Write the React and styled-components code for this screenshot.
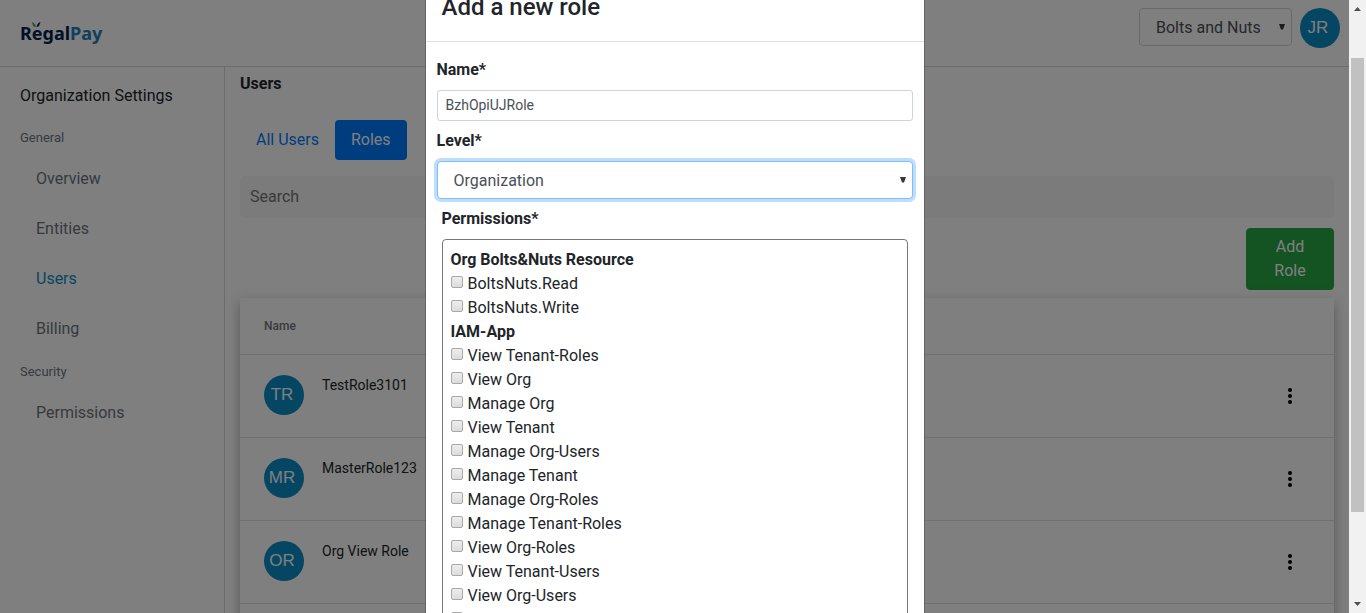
import React from "react";
import styled, { createGlobalStyle, css } from "styled-components";

const GlobalStyle = createGlobalStyle`
  *, *::before, *::after { box-sizing: border-box; }
  body {
    margin: 0;
    background: #fff;
    color: #212529;
    font-family: Roboto, "Liberation Sans", sans-serif;
    font-size: 16px;
    line-height: 24px;
  }
  button, input, select { font: inherit; color: inherit; margin: 0; }
`;

const brand = "#0b8cc6";
const line = "#dee2e6";

const Screen = styled.div`
  display: grid;
  grid-template-columns: minmax(0, 1fr) 17px;
  height: 100vh;
  overflow: hidden;
`;

const Viewport = styled.div`
  position: relative;
  display: flex;
  flex-direction: column;
  min-height: 0;
  overflow: hidden;
`;

/* Top bar */
const TopBar = styled.header`
  display: flex;
  flex: none;
  align-items: flex-start;
  justify-content: space-between;
  padding: 8px 9px 10px 20px;
  height: 67px;
  border-bottom: 1px solid #d9d9d9;
`;

const Brand = styled.a`
  position: relative;
  margin-top: 13px;
  color: #00214f;
  font-family: "Noto Sans", sans-serif;
  font-size: 18px;
  font-weight: 700;
  line-height: 24px;
  text-decoration: none;
`;

const BrandAccent = styled.span`
  color: #2380b8;
`;

const Leaves = styled.svg`
  position: absolute;
  left: 12px;
  top: 1px;
`;

const Account = styled.div`
  display: flex;
  gap: 8px;
`;

const Avatar = styled.span`
  display: flex;
  flex: none;
  align-items: center;
  justify-content: center;
  width: 40px;
  height: 40px;
  padding-right: 4px;
  border-radius: 50%;
  background: ${brand};
  color: #fff;
  font-family: "Liberation Sans", sans-serif;
  font-size: 17px;
`;

const SelectWrap = styled.div`
  position: relative;
  width: ${(p) => p.$width || "100%"};
`;

const Select = styled.select`
  display: block;
  appearance: none;
  width: 100%;
  height: 38px;
  padding: 2px 16px 0;
  border: 1px solid #ced4da;
  border-radius: 4px;
  background: #fff;
  color: #495057;
  outline: none;
  ${(p) =>
    p.$focused &&
    css`
      border-color: #80bdff;
      box-shadow: 0 0 0 3px #bfdeff;
    `}
`;

const SelectArrow = styled.svg`
  position: absolute;
  right: 7px;
  top: 16px;
  pointer-events: none;
`;

/* Body */
const Columns = styled.div`
  display: grid;
  grid-template-columns: 225px minmax(0, 1fr);
  flex: 1;
`;

const Sidebar = styled.nav`
  padding: 17px 20px;
  border-right: 1px solid #d9d9d9;
`;

const SidebarTitle = styled.h1`
  margin: 0 0 20px;
  font-size: 16px;
  font-weight: 400;
  line-height: 24px;
  color: #212529;
`;

const GroupTitle = styled.h2`
  margin: 0 0 6px;
  font-size: 13px;
  font-weight: 400;
  line-height: 20px;
  color: #6c757d;
`;

const NavList = styled.ul`
  margin: 0 0 8px;
  padding: 0 0 0 16px;
  list-style: none;
`;

const NavLink = styled.a`
  display: block;
  line-height: 50px;
  text-decoration: none;
  color: ${(p) => (p.$active ? brand : "#6c757d")};
`;

const Main = styled.main`
  display: flex;
  flex-direction: column;
  align-items: stretch;
  padding: 5px 15px 0;
`;

const MainTitle = styled.h2`
  margin: 0 0 24px;
  font-size: 16px;
  font-weight: 700;
  line-height: 24px;
`;

const Tabs = styled.div`
  display: flex;
  margin-bottom: 16px;
`;

const Tab = styled.button`
  padding: 8px 16px;
  border: 0;
  border-radius: 4px;
  background: ${(p) => (p.$active ? "#007bff" : "transparent")};
  color: ${(p) => (p.$active ? "#fff" : "#007bff")};
`;

const Search = styled.input`
  width: 100%;
  height: 42px;
  padding: 0 10px 2px;
  border: 0;
  border-radius: 5px;
  background: #f6f6f6;
  &::placeholder { color: #757575; }
`;

const AddButton = styled.button`
  align-self: flex-end;
  width: 88px;
  margin: 10px 0 8px;
  padding: 6px 12px;
  border: 1px solid #28a745;
  border-radius: 4px;
  background: #28a745;
  color: #fff;
`;

const Card = styled.section`
  background: #fff;
  box-shadow: 0 5px 5px -3px rgba(0, 0, 0, 0.2), 0 8px 10px 1px rgba(0, 0, 0, 0.14),
    0 3px 14px 2px rgba(0, 0, 0, 0.12);
`;

const Table = styled.table`
  width: 100%;
  border-spacing: 0;
`;

const HeadCell = styled.th`
  height: 57px;
  padding: 0 24px;
  border-bottom: 1px solid #e0e0e0;
  color: #757575;
  font-size: 12px;
  font-weight: 500;
  text-align: left;
`;

const Cell = styled.td`
  height: 83px;
  padding: 0 24px 2px;
  border-bottom: 1px solid #e0e0e0;
  ${(p) => p.$end && css`
    width: 88px;
    padding: 0 24px;
    text-align: center;
  `}
`;

const Person = styled.div`
  display: flex;
  gap: 18px;
  font-size: 14px;
  line-height: 20px;
`;

const MenuButton = styled.button`
  display: flex;
  justify-content: center;
  width: 40px;
  padding: 0;
  border: 0;
  background: none;
`;

/* Modal */
const Backdrop = styled.div`
  position: absolute;
  inset: 0;
  overflow: hidden;
  background: rgba(0, 0, 0, 0.5);
`;

const Dialog = styled.form`
  width: 100%;
  max-width: 500px;
  margin: -28px auto 28px;
  border: 1px solid rgba(0, 0, 0, 0.2);
  border-radius: 5px;
  background: #fff;
  background-clip: padding-box;
`;

const DialogHeader = styled.header`
  padding: 16px;
  border-bottom: 1px solid ${line};
`;

const DialogTitle = styled.h2`
  margin: 0;
  font-size: 24px;
  font-weight: 500;
  line-height: 36px;
`;

const DialogBody = styled.div`
  display: flex;
  flex-direction: column;
  gap: 8px;
  padding: 16px 11px;
`;

const Label = styled.label`
  font-weight: 700;
`;

const TextInput = styled.input`
  width: 100%;
  height: 31px;
  padding: 0 8px 2px;
  border: 1px solid #ced4da;
  border-radius: 3px;
  color: #495057;
  font-size: 14px;
`;

const Permissions = styled.section`
  display: flex;
  flex-direction: column;
  gap: 8px;
  padding: 0 5px;
`;

const SectionTitle = styled.h3`
  margin: 0;
  font-size: 16px;
  font-weight: 700;
  line-height: 24px;
`;

const PermissionBox = styled.div`
  padding: 8px;
  border: 1px solid #777;
  border-radius: 4px;
`;

const Option = styled.label`
  display: flex;
  align-items: center;
  gap: 5px;
`;

const Checkbox = styled.input`
  appearance: none;
  width: 12px;
  height: 12px;
  margin-bottom: 4px;
  border: 1px solid #a9a9a9;
  border-radius: 2px;
  background: linear-gradient(#eee, #dcdcdc);
`;

/* Scrollbar */
const Track = styled.div`
  display: flex;
  flex-direction: column;
  align-items: center;
  background: #f1f1f1;
`;

const TrackArrow = styled.svg`
  flex: none;
  width: 17px;
  height: 17px;
  fill: #505050;
`;

const Gap = styled.span`
  flex: ${(p) => p.$share};
`;

const Thumb = styled.span`
  flex: 454;
  width: 13px;
  background: #c1c1c1;
`;

const groups = [
  { title: "General", items: ["Overview", "Entities", "Users", "Billing"] },
  { title: "Security", items: ["Permissions"] },
];

const roles = [
  ["TR", "TestRole3101"],
  ["MR", "MasterRole123"],
  ["OR", "Org View Role"],
];

const permissionGroups = [
  { title: "Org Bolts&Nuts Resource", items: ["BoltsNuts.Read", "BoltsNuts.Write"] },
  {
    title: "IAM-App",
    items: [
      "View Tenant-Roles",
      "View Org",
      "Manage Org",
      "View Tenant",
      "Manage Org-Users",
      "Manage Tenant",
      "Manage Org-Roles",
      "Manage Tenant-Roles",
      "View Org-Roles",
      "View Tenant-Users",
      "View Org-Users",
      "Manage Tenant-Users",
    ],
  },
];

function Dropdown({ id, label, value, width, focused }) {
  return (
    <SelectWrap $width={width}>
      <Select id={id} aria-label={label} defaultValue={value} $focused={focused}>
        <option>{value}</option>
      </Select>
      <SelectArrow width="6" height="6" viewBox="0 0 6 6" aria-hidden="true">
        <path d="M0 0h6L4 5.600H2z" fill="#343a40" />
      </SelectArrow>
    </SelectWrap>
  );
}

function PageScrollbar() {
  return (
    <Track aria-hidden="true">
      <TrackArrow viewBox="0 0 17 17"><path d="M5 11h7L8.500 7z" /></TrackArrow>
      <Gap $share={41} />
      <Thumb />
      <Gap $share={84} />
      <TrackArrow viewBox="0 0 17 17"><path d="M5 6h7l-3.500 4z" /></TrackArrow>
    </Track>
  );
}

export default function App() {
  return (
    <Screen>
      <GlobalStyle />
      <Viewport>
        <TopBar>
          <Brand href="#home">
            Regal<BrandAccent>Pay</BrandAccent>
            <Leaves width="9" height="5" viewBox="0 0 9 5" aria-hidden="true">
              <path d="M0 0C2 1 3.500 2.500 4 5L1.500 4.500C.8 3 .3 1.500 0 0z" fill="#4f9a5c" />
              <path d="M8.500 0C6 1 4.800 2.500 4.500 5L6.500 4.500C7.500 3 8.200 1.500 8.500 0z" fill="#00214f" />
            </Leaves>
          </Brand>
          <Account>
            <Dropdown label="Organization" value="Bolts and Nuts" width="153px" />
            <Avatar>JR</Avatar>
          </Account>
        </TopBar>
        <Columns>
          <Sidebar>
            <SidebarTitle>Organization Settings</SidebarTitle>
            {groups.map((group) => (
              <React.Fragment key={group.title}>
                <GroupTitle>{group.title}</GroupTitle>
                <NavList>
                  {group.items.map((item) => (
                    <li key={item}>
                      <NavLink href={`#${item.toLowerCase()}`} $active={item === "Users"}>{item}</NavLink>
                    </li>
                  ))}
                </NavList>
              </React.Fragment>
            ))}
          </Sidebar>
          <Main>
            <MainTitle>Users</MainTitle>
            <Tabs>
              <Tab type="button">All Users</Tab>
              <Tab type="button" $active>Roles</Tab>
            </Tabs>
            <Search type="text" placeholder="Search" aria-label="Search" />
            <AddButton type="button">Add Role</AddButton>
            <Card>
              <Table>
                <thead>
                  <tr>
                    <HeadCell>Name</HeadCell>
                    <HeadCell aria-label="Actions" />
                  </tr>
                </thead>
                <tbody>
                  {roles.map(([initials, name]) => (
                    <tr key={name}>
                      <Cell>
                        <Person>
                          <Avatar>{initials}</Avatar>
                          {name}
                        </Person>
                      </Cell>
                      <Cell $end>
                        <MenuButton type="button" aria-label={`Actions for ${name}`}>
                          <svg width="4" height="16" viewBox="0 0 4 16" fill="#000">
                            <circle cx="2" cy="2" r="2" />
                            <circle cx="2" cy="8" r="2" />
                            <circle cx="2" cy="14" r="2" />
                          </svg>
                        </MenuButton>
                      </Cell>
                    </tr>
                  ))}
                  <tr><Cell colSpan={2} /></tr>
                </tbody>
              </Table>
            </Card>
          </Main>
        </Columns>
        <Backdrop>
          <Dialog role="dialog" aria-labelledby="dialog-title">
            <DialogHeader>
              <DialogTitle id="dialog-title">Add a new role</DialogTitle>
            </DialogHeader>
            <DialogBody>
              <Label htmlFor="role-name">Name*</Label>
              <TextInput id="role-name" type="text" defaultValue="BzhOpiUJRole" />
              <Label htmlFor="role-level">Level*</Label>
              <Dropdown id="role-level" value="Organization" focused />
              <Permissions>
                <SectionTitle>Permissions*</SectionTitle>
                <PermissionBox>
                  {permissionGroups.map((group) => (
                    <React.Fragment key={group.title}>
                      <SectionTitle>{group.title}</SectionTitle>
                      {group.items.map((item) => (
                        <Option key={item}>
                          <Checkbox type="checkbox" />
                          {item}
                        </Option>
                      ))}
                    </React.Fragment>
                  ))}
                </PermissionBox>
              </Permissions>
            </DialogBody>
          </Dialog>
        </Backdrop>
      </Viewport>
      <PageScrollbar />
    </Screen>
  );
}
